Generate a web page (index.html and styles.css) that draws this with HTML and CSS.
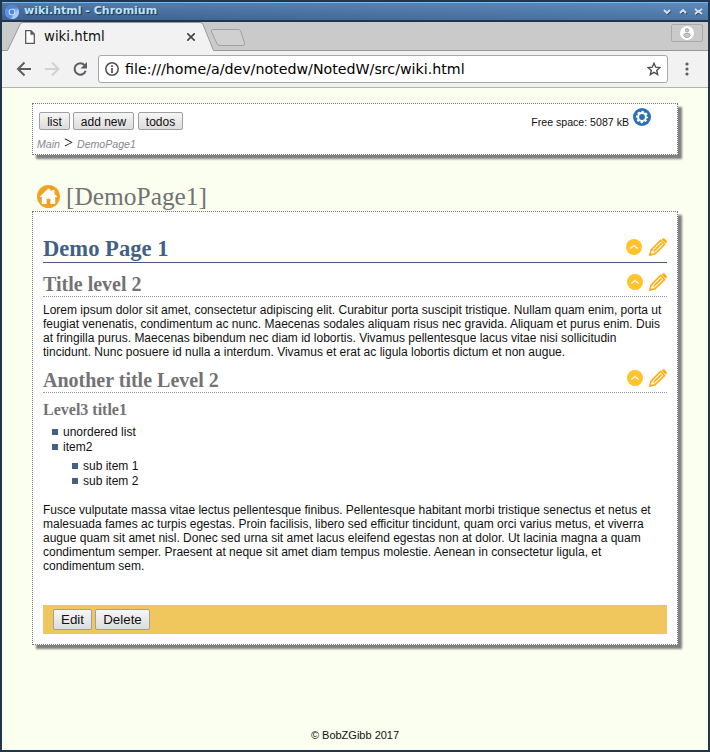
FILE: index.html
```
<!DOCTYPE html>
<html lang="en">
<head>
<meta charset="utf-8">
<title>wiki.html</title>
<link rel="stylesheet" href="styles.css">
</head>
<body>
<svg class="defs" aria-hidden="true">
  <defs>
    <symbol id="up" viewBox="0 0 16 16"><circle cx="8" cy="8" r="8" fill="#ffc32c"/><path d="M4.300 9.500 8 6.500l3.700 3" fill="none" stroke="#fff" stroke-width="1.300"/></symbol>
    <symbol id="pencil" viewBox="0 0 18 18"><g fill="none" stroke="#ffad0d" stroke-width="1.500"><path d="M.9 17.100 2.200 11.900 11.600 2.400 15.600 6.400 6.100 15.800Z"/><path d="M5.300 12.700 12.700 5.300" stroke-width="1.700"/><path d="M2.200 11.900c2.100.2 3.600 1.700 3.900 3.900" stroke-width="1"/></g><path d="m12.600 1.500 1-1q.9-.7 1.800 0l2.200 2.200q.7.900 0 1.800l-1 1ZM.4 17.700l.8-3 2.100 2.200Z" fill="#ffad0d"/></symbol>
  </defs>
</svg>
<div class="window">
  <header class="titlebar">
    <svg class="logo" viewBox="0 0 14 14"><circle cx="7" cy="7" r="7" fill="#7ba7ed"/><path d="M7 7 1 3.500A7 7 0 0 1 13 3.500H7Z" fill="#4a83df"/><path d="M1 3.500A7 7 0 0 0 6 14L8 9Z" fill="#5b91eb"/><path d="M13.200 4A7 7 0 0 1 6 14l4-6Z" fill="#a9c6f7"/><circle cx="7" cy="7" r="3.300" fill="#dce9fd"/><circle cx="7" cy="7" r="2.400" fill="#4e83ee"/></svg>
    <span class="caption">wiki.html - Chromium</span>
    <svg class="controls" viewBox="0 0 40 8"><g fill="none" stroke="#2c4d75" stroke-width="1.600" transform="translate(1 1)"><path d="m1 2 3 3 3-3M17 5l3-3 3 3M32 1l6 5M38 1l-6 5"/></g><g fill="none" stroke="#dce5ee" stroke-width="1.800"><path d="m1 2 3 3 3-3M17 5l3-3 3 3M32 .8l2.500 2.400h2L39 .8M32 6.200l2.500-2.400h2L39 6.200"/></g></svg>
  </header>
  <div class="tabs">
    <svg class="tabshape" viewBox="0 0 706 29"><path d="M0 28.500H5.500L18 2.500Q18.700.5 21 .5H198Q200.300.5 201 2.500L211.500 28.500H706V30H0Z" fill="#f2f2f2"/><path d="M0 28.500H5.500L18 2.500Q18.700.5 21 .5H198Q200.300.5 201 2.500L211.500 28.500H706" fill="none" stroke="#999"/><path d="M211 7.500H236Q238 7.500 238.700 9L242.500 21Q243 23.500 241 23.500H218Q216 23.500 215.200 22L209.500 10Q208.700 7.500 211 7.500Z" fill="#d0d0d0" stroke="#a0a0a0"/></svg>
    <div class="tab">
      <svg class="doc" viewBox="0 0 10 14"><path d="M.7.700H6L9.300 4V13.300H.7ZM6 .7V4H9.300" fill="#fff" stroke="#5a5a5a" stroke-width="1.300"/></svg>
      <span class="tabname">wiki.html</span>
      <svg class="close" viewBox="0 0 8 8"><path d="m.2.200 7.600 7.600m0-7.600-7.600 7.600" stroke="#444" stroke-width="1.600"/></svg>
    </div>
    <div class="profile"><svg viewBox="0 0 14 14"><circle cx="7" cy="7" r="7" fill="#fff"/><circle cx="7" cy="4.300" r="1.700" fill="#c8c8c8" stroke="#999" stroke-width=".8"/><path d="M3.500 9.500Q3.600 7.300 7 7.300t3.500 2.200Q9.500 11.500 7 11.500T3.500 9.500Z" fill="#c8c8c8" stroke="#999" stroke-width=".8"/></svg></div>
  </div>
  <div class="toolbar">
    <svg class="nav" viewBox="0 0 74 16"><path d="M15 8H2M8.500 1.500 2 8 8.500 14.500" fill="none" stroke="#5a5d61" stroke-width="2"/><path d="M29 8h13M36 1.500 42.500 8 36 14.500" fill="none" stroke="#d2d2d2" stroke-width="2"/><path d="M68.600 4.200A5.700 5.700 0 1 0 69.700 9.700" fill="none" stroke="#5a5d61" stroke-width="2"/><path d="M71 1v6.500h-6.500Z" fill="#5a5d61"/></svg>
    <div class="address">
      <svg class="info" viewBox="0 0 14 14"><circle cx="7" cy="7" r="6.200" fill="none" stroke="#505050" stroke-width="1.500"/><path d="M7 3.200v1.700M7 6v5" stroke="#505050" stroke-width="1.700"/></svg>
      <span class="url">file:///home/a/dev/notedw/NotedW/src/wiki.html</span>
      <svg class="star" viewBox="0 0 14 14"><path d="m7 1.300 1.700 3.900 4.200.4-3.200 2.800 1 4.200L7 10.400l-3.700 2.200 1-4.200L1.100 5.600l4.200-.4Z" fill="none" stroke="#505050" stroke-width="1.400"/></svg>
    </div>
    <svg class="more" viewBox="0 0 4 14"><g fill="#5a5d61"><circle cx="2" cy="2" r="1.600"/><circle cx="2" cy="7" r="1.600"/><circle cx="2" cy="12" r="1.600"/></g></svg>
  </div>
  <main class="page">
    <section class="box menu">
      <div class="menurow">
        <button class="small b-list">list</button><button class="small b-add">add new</button><button class="small b-todos">todos</button>
        <span class="space">Free space: 5087 kB</span>
        <svg class="gear" viewBox="0 0 18 18"><circle cx="9" cy="9" r="9" fill="#2a70b8"/><circle cx="9" cy="9" r="3.900" fill="none" stroke="#fff" stroke-width="2"/><circle cx="9" cy="9" r="5.300" fill="none" stroke="#fff" stroke-width="1.700" stroke-dasharray="2.300 1.863" stroke-dashoffset="1.150"/></svg>
      </div>
      <div class="crumbs"><i>Main</i><span class="gt">&gt;</span><i>DemoPage1</i></div>
    </section>
    <div class="pagetitle">
      <svg class="home" viewBox="0 0 22 22"><circle cx="11" cy="11" r="11" fill="#f2a223"/><path d="M11 3 2.300 11.500H4.600V18.200H9.200V13.200H12.800V18.200H17.400V11.500H19.700L16.700 8.500V4.800H14.600V6.500Z" fill="#fff"/></svg>
      <span>[DemoPage1]</span>
    </div>
    <article class="box content">
      <div class="head h-one"><h1>Demo Page 1</h1><svg class="up"><use href="#up"/></svg><svg class="pencil"><use href="#pencil"/></svg></div>
      <div class="head h-two"><h2>Title level 2</h2><svg class="up"><use href="#up"/></svg><svg class="pencil"><use href="#pencil"/></svg></div>
      <p>Lorem ipsum dolor sit amet, consectetur adipiscing elit. Curabitur porta suscipit tristique. Nullam quam enim, porta ut<br>feugiat venenatis, condimentum ac nunc. Maecenas sodales aliquam risus nec gravida. Aliquam et purus enim. Duis<br>at fringilla purus. Maecenas bibendum nec diam id lobortis. Vivamus pellentesque lacus vitae nisi sollicitudin<br>tincidunt. Nunc posuere id nulla a interdum. Vivamus et erat ac ligula lobortis dictum et non augue.</p>
      <div class="head h-two"><h2>Another title Level 2</h2><svg class="up"><use href="#up"/></svg><svg class="pencil"><use href="#pencil"/></svg></div>
      <h3>Level3 title1</h3>
      <ul>
        <li>unordered list</li>
        <li>item2
          <ul><li>sub item 1</li><li>sub item 2</li></ul>
        </li>
      </ul>
      <p class="last">Fusce vulputate massa vitae lectus pellentesque finibus. Pellentesque habitant morbi tristique senectus et netus et<br>malesuada fames ac turpis egestas. Proin facilisis, libero sed efficitur tincidunt, quam orci varius metus, et viverra<br>augue quam sit amet nisl. Donec sed urna sit amet lacus eleifend egestas non at dolor. Ut lacinia magna a quam<br>condimentum semper. Praesent at neque sit amet diam tempus molestie. Aenean in consectetur ligula, et<br>condimentum sem.</p>
      <div class="actions"><button class="b-edit">Edit</button><button class="b-delete">Delete</button></div>
    </article>
    <footer>© BobZGibb 2017</footer>
  </main>
</div>
</body>
</html>
```
FILE: styles.css
```
* { box-sizing: border-box; }
body { margin: 0; overflow: hidden; font: 12px/14px "Liberation Sans", sans-serif; color: #111; }
svg { display: block; flex: none; }
.defs { position: absolute; width: 0; height: 0; }
.window { width: 710px; height: 752px; border: 2px solid #23354a; display: flex; flex-direction: column; background: #fbfff0; }

.titlebar { height: 20px; flex: none; display: flex; align-items: center; padding: 0 5px 0 3px; border-top: 1px solid #77b8f4; border-bottom: 2px solid #23354a; background: linear-gradient(90deg, rgba(40, 70, 110, .2), rgba(110, 165, 220, .2)), linear-gradient(#5685b9, #446793); }
.logo { width: 14px; height: 14px; margin-top: 1px; }
.caption { margin-left: 5px; flex: 1; font: bold 11px/16px "DejaVu Sans", sans-serif; color: #b9e3fb; text-shadow: 1px 1px 1px #1d3350; white-space: nowrap; position: relative; top: -1px; }
.controls { width: 40px; height: 8px; overflow: visible; }

.tabs { position: relative; height: 29px; flex: none; background: #cacaca; display: flex; align-items: flex-start; justify-content: space-between; }
.tabshape { position: absolute; left: 0; top: 0; width: 706px; height: 29px; overflow: hidden; }
.tab { position: relative; width: 212px; height: 29px; display: flex; align-items: center; padding-left: 23px; }
.doc { width: 10px; height: 14px; }
.tabname { width: 142px; margin-left: 9px; font: 13.333px/16px "DejaVu Sans", sans-serif; }
.close { width: 8px; height: 8px; margin-left: 1px; }
.profile { position: relative; width: 32px; height: 18px; margin: 2px 5px 0 0; border: 1px solid #aaa; border-radius: 2px; display: flex; align-items: center; justify-content: center; }
.profile svg { width: 14px; height: 14px; }

.toolbar { height: 37px; flex: none; background: #f2f2f2; border-bottom: 1px solid #b2b2b2; display: flex; align-items: center; padding-left: 14px; }
.nav { width: 74px; height: 16px; }
.address { width: 570px; height: 28px; margin-left: 8px; border: 1px solid #a9a9a9; border-radius: 3px; background: #fff; display: flex; align-items: center; padding: 0 6px; }
.info { width: 14px; height: 14px; }
.url { flex: 1; margin-left: 6px; font: 14.22px/18px "DejaVu Sans", sans-serif; white-space: nowrap; color: #000; }
.star { width: 14px; height: 14px; }
.more { width: 4px; height: 14px; margin-left: 16.5px; }

.page { flex: 1; padding: 15px 30px 0; }
.box { width: 646px; border: 1px dotted #777; background: #fff; box-shadow: 4px 4px 2px #808080; }
.menu { height: 52px; padding: 4px 0 0 6px; }
.menurow { display: flex; height: 26px; }
button { height: 21px; padding: 0; border: 1px solid #a0a0a0; border-radius: 2px; background: linear-gradient(#f6f6f6, #dcdcdc); font: 13.333px/17px "Liberation Sans", sans-serif; color: #111; }
.small { height: 18px; margin-top: 4px; padding-top: 1px; font-size: 12px; line-height: 14px; }
.b-list { width: 31px; }
.b-add { width: 61px; margin-left: 3px; }
.b-todos { width: 45px; margin-left: 4px; }
.space { margin: 7px 4px 0 auto; font-size: 10.6px; }
.gear { width: 18px; height: 18px; margin-right: 26px; }
.crumbs { display: flex; align-items: baseline; margin: 0 0 0 -2px; font-size: 10.6px; line-height: 18px; color: #888; }
.gt { margin: 0 4px; font: 16px/18px "Liberation Serif", serif; color: #000; }
.pagetitle { height: 56px; padding: 25px 0 0 5px; display: flex; font: 25.4px/32px "Liberation Serif", serif; color: #737373; }
.home { width: 23px; height: 23px; margin: 5px 6px 0 0; }

.content { height: 434px; padding: 20px 10px 0; }
h1, h2, h3, p, ul { margin: 0; }
h1, h2, h3 { font-family: "Liberation Serif", serif; font-weight: bold; color: #737373; }
.head { display: flex; align-items: flex-end; }
.head h1, .head h2 { flex: 1; }
.h-one { height: 31px; border-bottom: 1px solid #435c7e; }
h1 { color: #435f84; font-size: 22.6px; line-height: 27px; }
.h-two { height: 34px; border-bottom: 1px dotted #999; }
h2 { font-size: 20px; line-height: 24px; }
.up { width: 16px; height: 16px; margin: 0 6px 6px 0; }
.h-one .up { margin: 0 7px 7px 0; }
.pencil { width: 18px; height: 18px; margin-bottom: 5px; }
.h-one .pencil { margin-bottom: 6px; }
p { padding-top: 6px; white-space: nowrap; }
h3 { margin-top: 8px; font-size: 16px; line-height: 18px; }
ul { list-style: none; padding: 6px 0 0 20px; }
li { position: relative; line-height: 15px; }
li::before { content: ""; position: absolute; left: -11px; top: 4px; width: 6px; height: 6px; background: #466084; }
li ul { padding-top: 4px; }
.last { padding-top: 14px; }
.actions { height: 29px; margin-top: 32px; padding: 4px 10px; display: flex; gap: 3px; background: #f0c75c; }
.b-edit { width: 39px; }
.b-delete { width: 55px; }
footer { margin: 83px 0 0; width: 646px; text-align: center; font-size: 11px; }
```
